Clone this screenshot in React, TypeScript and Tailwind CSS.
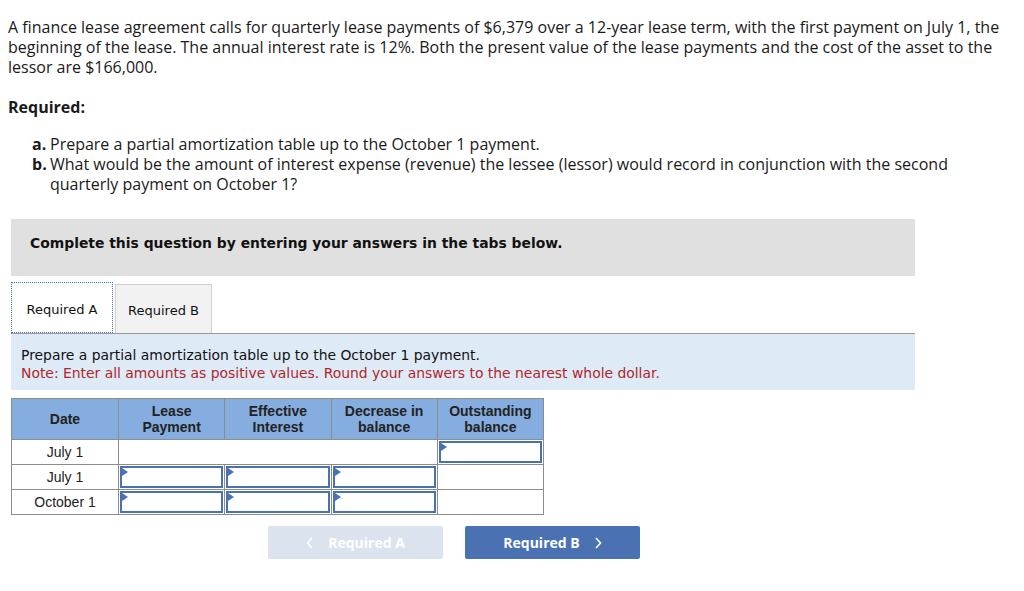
import React from 'react';

const sans = { fontFamily: '"Open Sans", "Liberation Sans", sans-serif' };

const cols = ['Lease Payment', 'Effective Interest', 'Decrease in balance', 'Outstanding balance'];

function Input() {
  return (
    <div className="relative h-[22px] border-2 border-[#4a72b2] bg-white">
      <span className="absolute left-0 top-0 h-0 w-0 border-y-[4px] border-l-[6px] border-y-transparent border-l-[#4a72b2]" />
    </div>
  );
}

function Chevron({ left }: { left?: boolean }) {
  return (
    <svg width="8" height="12" viewBox="0 0 8 12" className="inline-block">
      <polyline
        points={left ? '6,1 1.5,6 6,11' : '2,1 6.5,6 2,11'}
        fill="none"
        stroke="currentColor"
        strokeWidth="1.6"
      />
    </svg>
  );
}

function Header({ label }: { label: string }) {
  const [a, b] = label === 'Decrease in balance' ? ['Decrease in', 'balance'] : label.split(' ');
  return (
    <>
      {a}
      <br />
      {b}
    </>
  );
}

export default function App() {
  const rows = [
    { date: 'July 1', first: true },
    { date: 'July 1', first: false },
    { date: 'October 1', first: false },
  ];

  return (
    <div className="min-h-[591px] bg-white px-2 pt-[17px] text-[#1a1a1a]" style={sans}>
      <p className="text-[16px] leading-[20px]">
        A finance lease agreement calls for quarterly lease payments of $6,379 over a 12-year lease term, with the first payment on July 1, the beginning of the lease. The annual interest rate is 12%. Both the present value of the lease payments and the cost of the asset to the lessor are $166,000.
      </p>

      <p className="mt-[20px] text-[16px] font-bold leading-[20px]">Required:</p>

      <ol className="mt-[17px] pl-[24px] pr-[60px] text-[16px] leading-[20px]">
        <li className="flex">
          <span className="w-[18px] shrink-0 font-bold">a.</span>
          <span>Prepare a partial amortization table up to the October 1 payment.</span>
        </li>
        <li className="flex">
          <span className="w-[18px] shrink-0 font-bold">b.</span>
          <span>
            What would be the amount of interest expense (revenue) the lessee (lessor) would record in conjunction with the second quarterly payment on October 1?
          </span>
        </li>
      </ol>

      <div className="ml-[3px] mt-[25px] w-[904px]" style={{ fontFamily: '"DejaVu Sans", Verdana, sans-serif' }}>
        <div className="h-[57px] bg-[#e0e0e0] pl-[19px] pt-[15px] text-[13.9px] font-bold leading-[18px] text-[#111]">
          Complete this question by entering your answers in the tabs below.
        </div>

        <div className="mt-[8px] flex h-[50px] items-end border-b border-[#9a9a9a]">
          <div className="flex h-[51px] w-[102px] items-center justify-center border border-dotted border-[#3a6fc4] bg-white pt-[4px] text-[13px] text-[#111]">
            Required A
          </div>
          <div className="ml-[2px] flex h-[49px] w-[97px] items-center justify-center border border-b-0 border-[#cfcfcf] bg-[#f2f2f2] pt-[3px] text-[13px] text-[#111]">
            Required B
          </div>
        </div>

        <div className="h-[56px] bg-[#deeaf6] pl-[10px] pt-[12px] text-[13.9px] leading-[18px]">
          <div className="text-[#111]">Prepare a partial amortization table up to the October 1 payment.</div>
          <div className="text-[#b0262b]">Note: Enter all amounts as positive values. Round your answers to the nearest whole dollar.</div>
        </div>

        <table
          className="mt-[8px] w-[533px] table-fixed border-collapse text-[14px]"
          style={{ fontFamily: '"Liberation Sans", Arial, sans-serif' }}
        >
          <thead>
            <tr className="h-[41px] bg-[#86addf]">
              <th className="w-[107px] border border-[#8c8c8c] font-bold leading-[16px] text-[#222]">Date</th>
              {cols.map((c) => (
                <th key={c} className="border border-[#8c8c8c] px-1 font-bold leading-[16px] text-[#222]">
                  <Header label={c} />
                </th>
              ))}
            </tr>
          </thead>
          <tbody>
            {rows.map((r, i) => (
              <tr key={i} className="h-[25px]">
                <td className="border border-[#8c8c8c] text-center leading-[16px] text-[#222]">{r.date}</td>
                {r.first ? (
                  <>
                    <td colSpan={3} className="border border-[#8c8c8c]" />
                    <td className="border border-[#8c8c8c] p-[1px]">
                      <Input />
                    </td>
                  </>
                ) : (
                  <>
                    <td className="border border-[#8c8c8c] p-[1px]">
                      <Input />
                    </td>
                    <td className="border border-[#8c8c8c] p-[1px]">
                      <Input />
                    </td>
                    <td className="border border-[#8c8c8c] p-[1px]">
                      <Input />
                    </td>
                    <td className="border border-[#8c8c8c]" />
                  </>
                )}
              </tr>
            ))}
          </tbody>
        </table>

        <div className="ml-[257px] mt-[11px] flex gap-[22px] text-[14px] font-bold" style={sans}>
          <button className="flex h-[33px] w-[175px] items-center justify-center gap-[14px] rounded-[2px] bg-[#dbe3ef] text-white">
            <Chevron left />
            Required A
          </button>
          <button className="flex h-[33px] w-[175px] items-center justify-center gap-[14px] rounded-[2px] bg-[#4a72b2] text-white">
            Required B
            <Chevron />
          </button>
        </div>
      </div>
    </div>
  );
}
